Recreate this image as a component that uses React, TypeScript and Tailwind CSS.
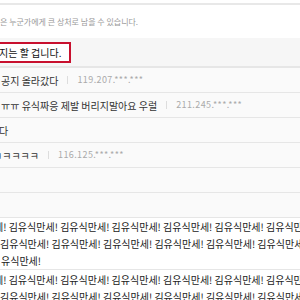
const rows = [
  { text: "공지 올라갔다", ml: "ml-[1px]", ip: "119.207.***.***" },
  { text: "ㅠㅠ 유식짜응 제발 버리지말아요 우럴", ml: "ml-[1px]", ip: "211.245.***.***" },
  { text: "다", ml: "ml-[-1px]", ip: "" },
  { text: "ㅋㅋㅋㅋㅋ", ml: "ml-[-7px]", ip: "116.125.***.***" },
  { text: "", ml: "", ip: "" },
  { text: "", ml: "", ip: "" },
];

const rep = "김유식만세! ".repeat(7);

const App = () => {
  return (
    <main className="w-[300px] h-[300px] overflow-hidden bg-white font-['Noto_Sans_CJK_KR',sans-serif]">
      {/* notice */}
      <div className="mt-[3px] border-t-2 border-[#e8e8e8] h-[35px] flex items-center whitespace-nowrap text-[8px] text-[#999]">
        은 누군가에게 큰 상처로 남을 수 있습니다.
      </div>

      {/* title */}
      <div className="bg-[#f6f6f6] h-[30px] pt-[4px] border-b-2 border-[#e6e6e6]">
        <div className="w-[74px] h-[21px] -ml-[3px] border-2 border-[#c8102e] bg-white flex items-center whitespace-nowrap text-[10px] text-[#111]">
          지는 할 겁니다.
        </div>
      </div>

      {/* comments */}
      <div className="bg-[#fafafa]">
        {rows.map((r, i) => (
          <div
            key={i}
            className="h-[25px] border-b border-[#e6e6e6] flex items-center whitespace-nowrap"
          >
            {r.text && (
              <span className={`${r.ml} text-[10px] text-[#333]`}>{r.text}</span>
            )}
            {r.ip && (
              <>
                <span className="mx-[9px] h-[8px] w-px bg-[#ddd]" />
                <span className="text-[9px] tracking-[0.4px] text-[#aaa]">{r.ip}</span>
              </>
            )}
          </div>
        ))}
      </div>

      {/* body */}
      <div className="border-b border-[#e6e6e6] text-[10px] leading-[17px] text-[#222] whitespace-nowrap overflow-hidden">
        <div className="-ml-[6px]">세! {rep}</div>
        <div>{rep}</div>
        <div className="ml-[1px]">유식만세!</div>
      </div>
      <div className="text-[10px] leading-[17px] text-[#222] whitespace-nowrap overflow-hidden pt-[1px]">
        <div className="-ml-[6px]">세! {rep}</div>
        <div>{rep}</div>
      </div>
    </main>
  );
};

export default App;
